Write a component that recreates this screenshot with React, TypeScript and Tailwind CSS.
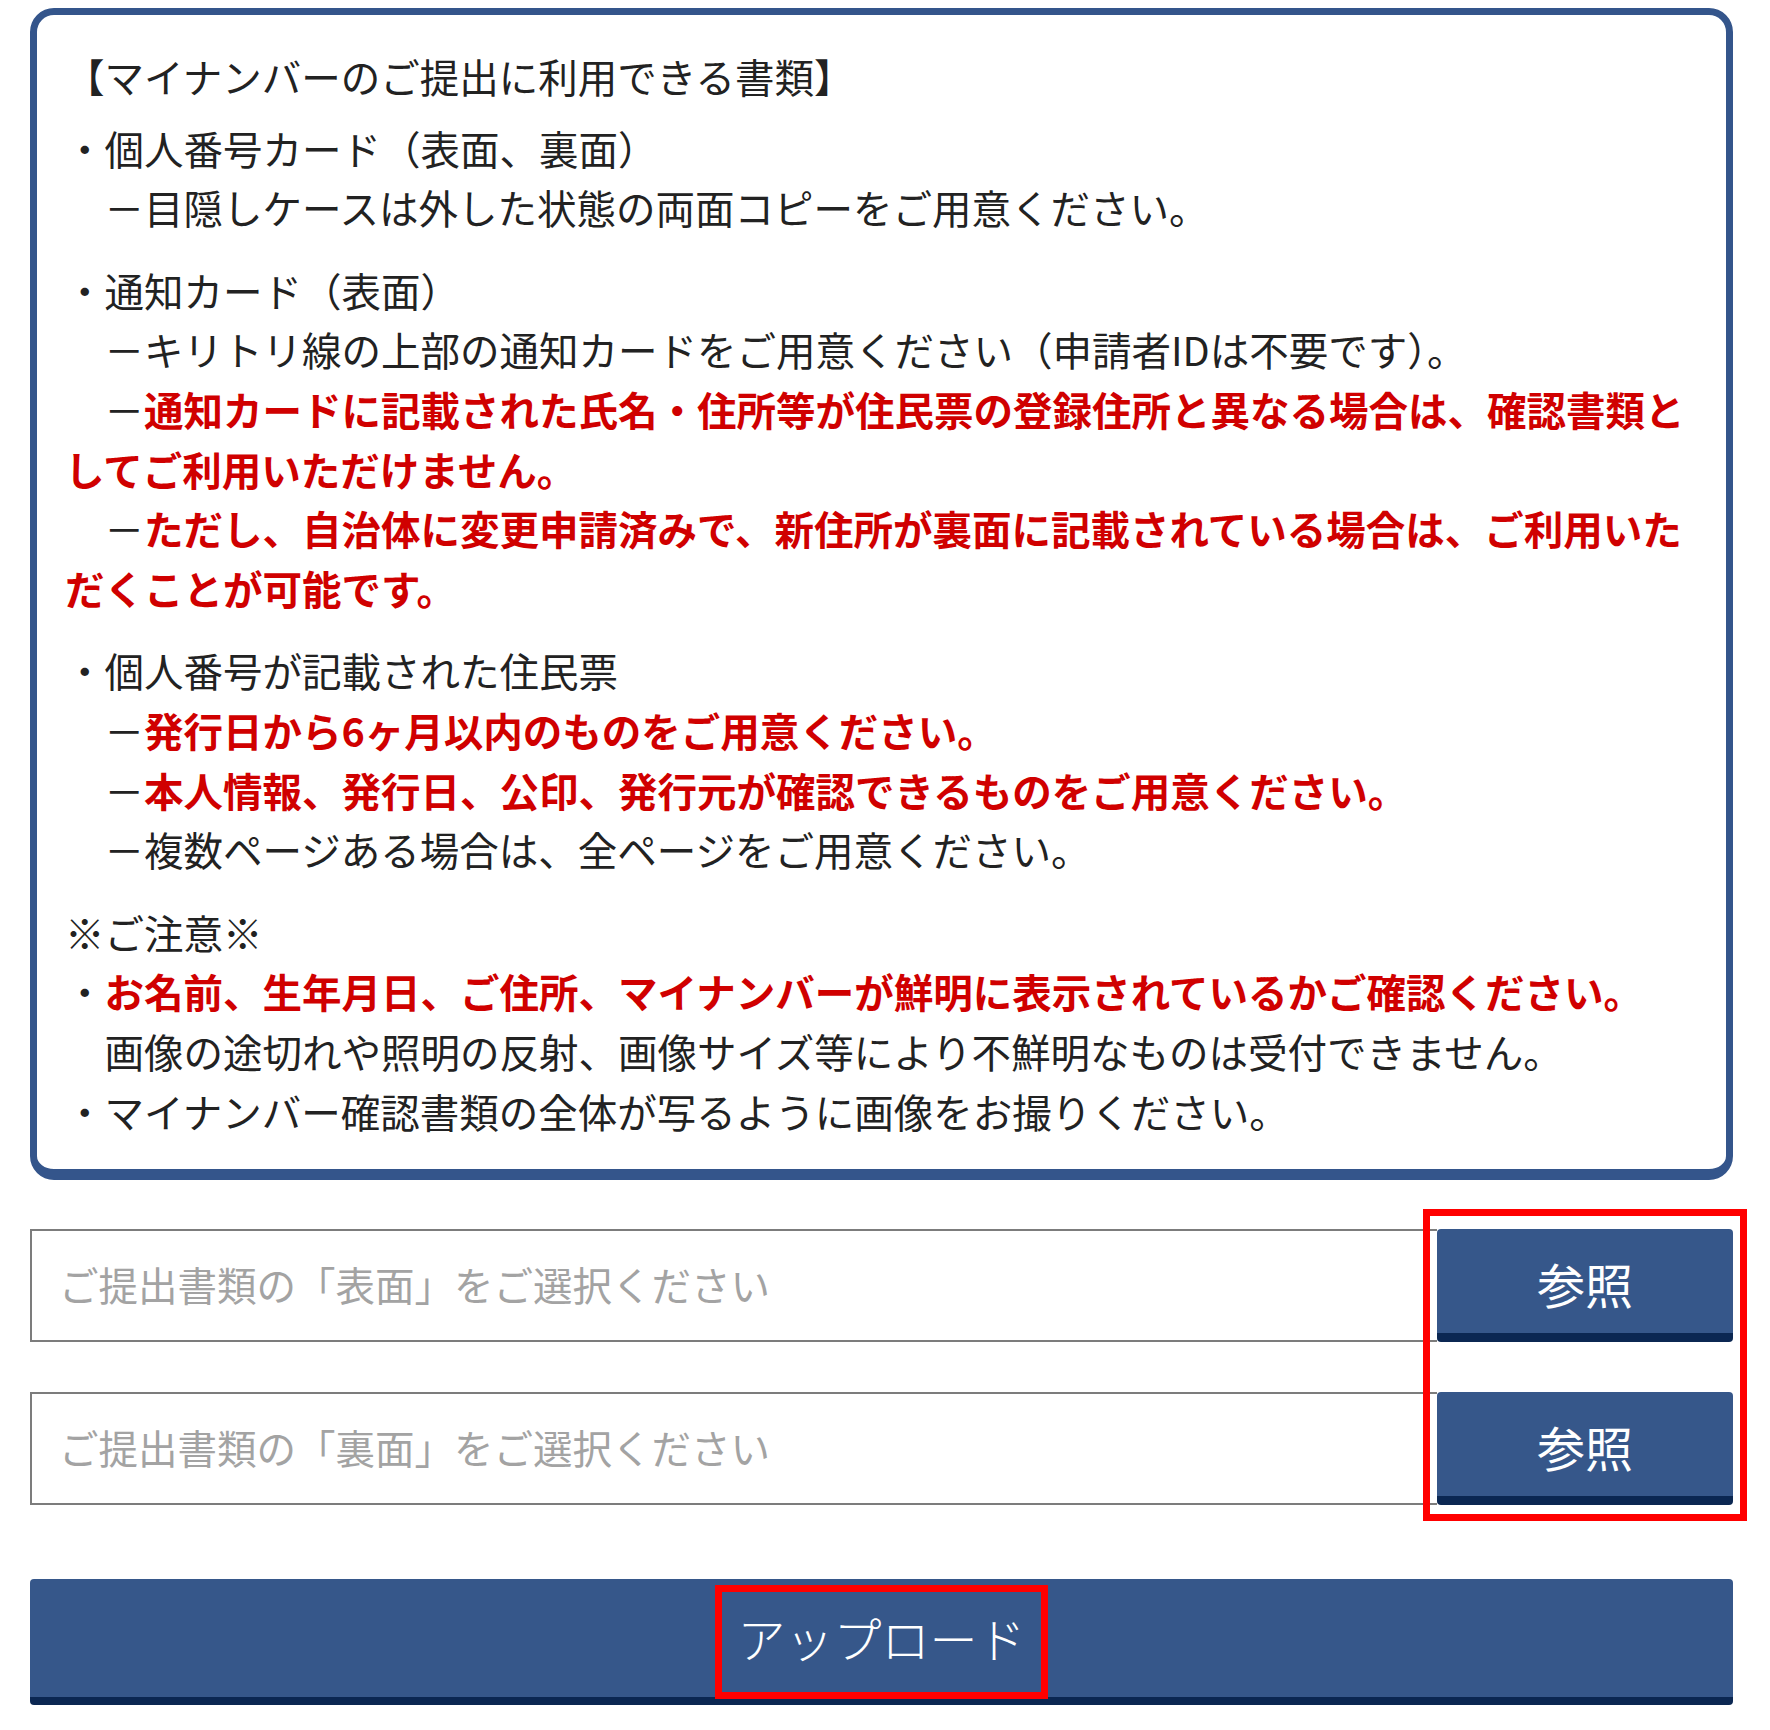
import React from "react";

type Seg = { t: string; red?: boolean };
type Line = Seg[];

const groups: Line[][] = [
  [
    [{ t: "・個人番号カード（表面、裏面）" }],
    [{ t: "　－目隠しケースは外した状態の両面コピーをご用意ください。" }],
  ],
  [
    [{ t: "・通知カード（表面）" }],
    [{ t: "　－キリトリ線の上部の通知カードをご用意ください（申請者IDは不要です）。" }],
    [
      { t: "　－" },
      { t: "通知カードに記載された氏名・住所等が住民票の登録住所と異なる場合は、確認書類と", red: true },
    ],
    [{ t: "してご利用いただけません。", red: true }],
    [
      { t: "　－" },
      { t: "ただし、自治体に変更申請済みで、新住所が裏面に記載されている場合は、ご利用いた", red: true },
    ],
    [{ t: "だくことが可能です。", red: true }],
  ],
  [
    [{ t: "・個人番号が記載された住民票" }],
    [{ t: "　－" }, { t: "発行日から6ヶ月以内のものをご用意ください。", red: true }],
    [{ t: "　－" }, { t: "本人情報、発行日、公印、発行元が確認できるものをご用意ください。", red: true }],
    [{ t: "　－複数ページある場合は、全ページをご用意ください。" }],
  ],
  [
    [{ t: "※ご注意※" }],
    [
      { t: "・" },
      { t: "お名前、生年月日、ご住所、マイナンバーが鮮明に表示されているかご確認ください。", red: true },
    ],
    [{ t: "　画像の途切れや照明の反射、画像サイズ等により不鮮明なものは受付できません。" }],
    [{ t: "・マイナンバー確認書類の全体が写るように画像をお撮りください。" }],
  ],
];

function TextLine({ line }: { line: Line }) {
  return (
    <div className="whitespace-nowrap">
      {line.map((s, i) =>
        s.red ? (
          <span key={i} className="font-bold text-[#d00000]">
            {s.t}
          </span>
        ) : (
          <span key={i}>{s.t}</span>
        ),
      )}
    </div>
  );
}

function FileRow({ placeholder }: { placeholder: string }) {
  return (
    <div className="flex h-[113px]">
      <div className="flex flex-1 items-center border-2 border-r-0 border-[#7c7c7c] bg-white pl-[27px] pb-[4px] text-[39.5px] text-[#a3a3a3]">
        {placeholder}
      </div>
      <button
        type="button"
        className="flex w-[296px] items-center justify-center rounded-[4px] border-b-[9px] border-[#0b2752] bg-[#36578a] pt-[4px] text-[48px] text-white"
      >
        参照
      </button>
    </div>
  );
}

export default function App() {
  return (
    <div className="relative h-[1730px] w-[1770px] overflow-hidden bg-white font-['Noto_Sans_CJK_JP','Noto_Sans',sans-serif]">
      <div className="pl-[30px] pr-[37px] pt-[8px]">
        {/* document list */}
        <div className="rounded-[24px] border-[7px] border-b-[11px] border-[#34558b] pl-[28px] pr-[8px] pt-[31px] pb-[29px] text-[39.5px] leading-[59.6px] text-[#222]">
          <div className="mb-[12px] whitespace-nowrap">【マイナンバーのご提出に利用できる書類】</div>
          <div className="flex flex-col gap-[23px]">
            {groups.map((g, gi) => (
              <div key={gi}>
                {g.map((line, li) => (
                  <TextLine key={li} line={line} />
                ))}
              </div>
            ))}
          </div>
        </div>

        {/* file pickers */}
        <div className="mt-[49px] flex flex-col gap-[50px]">
          <FileRow placeholder="ご提出書類の「表面」をご選択ください" />
          <FileRow placeholder="ご提出書類の「裏面」をご選択ください" />
        </div>

        <button
          type="button"
          className="mt-[74px] flex h-[126px] w-full items-center justify-center rounded-[4px] border-b-[8px] border-[#0b2752] bg-[#36578a] pb-[2px] text-[48px] font-light text-white"
        >
          アップロード
        </button>
      </div>

      {/* red annotation boxes */}
      <div className="absolute left-[1423px] top-[1209px] h-[312px] w-[324px] border-[7px] border-[#ff0000]" />
      <div className="absolute left-[715px] top-[1585px] h-[114px] w-[333px] border-[7px] border-[#ff0000]" />
    </div>
  );
}
